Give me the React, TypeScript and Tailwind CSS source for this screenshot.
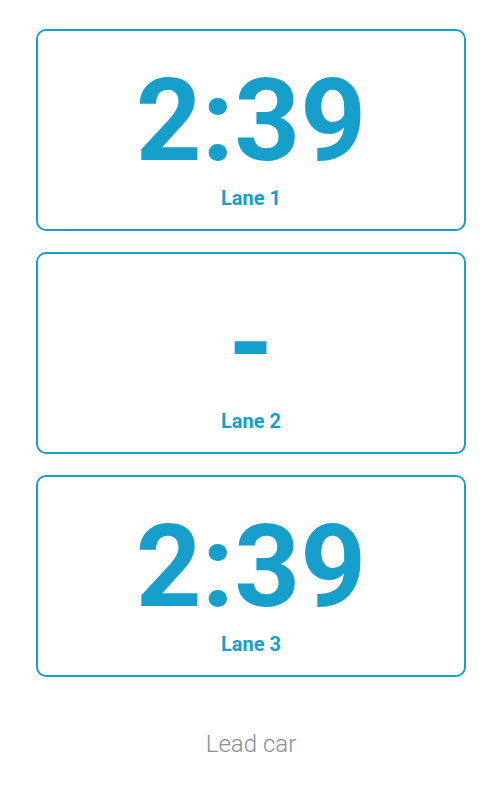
import React from 'react';

interface LaneData {
  id: number;
  time: string;
}

const lanes: LaneData[] = [
  { id: 1, time: '2:39' },
  { id: 2, time: '-' },
  { id: 3, time: '2:39' },
];

const LaneCard: React.FC<{ lane: LaneData }> = ({ lane }) => (
  <div className="h-[202px] rounded-[10px] border-2 border-[#169fca] flex flex-col items-center pt-[32px]">
    <div className="text-[115px] leading-none font-bold text-[#169fca] h-[115px]">{lane.time}</div>
    <div className="mt-[10px] text-[20px] leading-none font-bold text-[#169fca]">Lane {lane.id}</div>
  </div>
);

const App: React.FC = () => {
  return (
    <div
      className="min-h-[788px] bg-white px-[36px] pt-[29px]"
      style={{ fontFamily: 'Roboto, "Liberation Sans", sans-serif' }}
    >
      <div className="flex flex-col gap-[21px]">
        {lanes.map((lane) => (
          <LaneCard key={lane.id} lane={lane} />
        ))}
      </div>
      <div className="mt-[55px] text-center text-[24px] leading-none font-light text-[#8a8e93]">
        Lead car
      </div>
    </div>
  );
};

export default App;
